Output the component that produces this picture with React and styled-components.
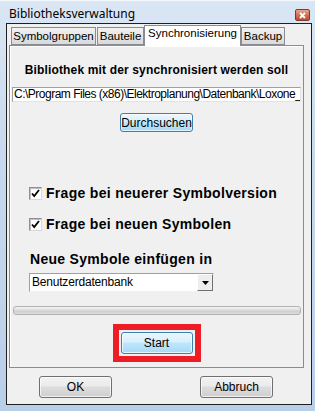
import styled, { createGlobalStyle } from "styled-components";

const GlobalStyle = createGlobalStyle`
  body {
    margin: 0;
    background: #ffffff;
  }
  * {
    box-sizing: border-box;
  }
`;

const Frame = styled.div`
  width: 315px;
  height: 411px;
  display: flex;
  flex-direction: column;
  padding: 0 3px 6px 6px;
  background: linear-gradient(180deg, #dae6f4 0%, #c6d8ed 40%, #b9cfe8 100%);
  border-top: 1px solid #f4f8fc;
`;

const TitleBar = styled.div`
  height: 22px;
  display: flex;
  align-items: center;
  justify-content: space-between;
  padding: 0 0 0 3px;
`;

const Title = styled.span`
  font-family: "Noto Sans", "Liberation Sans", sans-serif;
  font-size: 12px;
  color: #000;
  margin-top: 2px;
`;

const CloseButton = styled.div`
  width: 15px;
  height: 12px;
  margin: 6px 2px 0 0;
  border: 1px solid #7b3a2c;
  border-radius: 2px;
  background: linear-gradient(180deg, #e9a68f 0%, #d46f52 50%, #c24b2e 100%);
  display: flex;
  align-items: center;
  justify-content: center;
`;

const Client = styled.div`
  flex: 1;
  border: 1px solid #1f1f1f;
  background: #f0f0f0;
  padding: 3px 7px 0 2px;
  display: flex;
  flex-direction: column;
`;

const TabRow = styled.div`
  height: 18px;
  display: flex;
  align-items: flex-end;
  padding-left: 2px;
  position: relative;
  z-index: 1;
`;

const Tab = styled.div`
  width: ${(p) => p.$w}px;
  height: ${(p) => (p.$active ? "21px" : "18px")};
  margin-bottom: ${(p) => (p.$active ? "-1px" : "0")};
  margin-right: ${(p) => p.$gap || 0}px;
  padding-top: ${(p) => (p.$active ? "1px" : "2px")};
  border: 1px solid #898c95;
  border-bottom: ${(p) => (p.$active ? "none" : "1px solid #898c95")};
  background: ${(p) =>
    p.$active ? "#ffffff" : "linear-gradient(180deg, #f2f2f2 0%, #e5e5e5 50%, #d9d9d9 100%)"};
  font-family: "Liberation Sans", Arial, sans-serif;
  font-size: 11.5px;
  text-align: center;
  color: #000;
  white-space: nowrap;
`;

const Panel = styled.div`
  height: 323px;
  border: 1px solid #898c95;
  background: #f0f0f0;
  box-shadow: inset 1px 1px 0 #ffffff;
  display: flex;
  flex-direction: column;
  align-items: center;
  padding: 17px 2px 0;
`;

const Heading = styled.div`
  font-family: "Liberation Sans", Arial, sans-serif;
  font-size: 12px;
  font-weight: bold;
  letter-spacing: 0.15px;
  color: #000;
  line-height: 14px;
`;

const PathInput = styled.div`
  margin-top: 10px;
  align-self: stretch;
  height: 15px;
  border: 1px solid #a0a0a0;
  border-right-color: #e3e3e3;
  border-bottom-color: #e3e3e3;
  background: #fff;
  overflow: hidden;
  white-space: nowrap;
  font-family: "Liberation Sans", Arial, sans-serif;
  font-size: 12px;
  letter-spacing: -0.5px;
  line-height: 13px;
  padding-left: 1px;
  color: #000;
`;

const Button = styled.div`
  width: ${(p) => p.$w || 73}px;
  height: ${(p) => p.$h || 22}px;
  border: 1px solid ${(p) => (p.$focus ? "#3c7fb1" : "#707070")};
  border-radius: 3px;
  background: ${(p) =>
    p.$focus
      ? "linear-gradient(180deg, #eaf6fd 0%, #d9f0fc 45%, #bee6fd 50%, #a7d9f5 100%)"
      : "linear-gradient(180deg, #f2f2f2 0%, #ebebeb 45%, #dddddd 50%, #cfcfcf 100%)"};
  box-shadow: inset 0 0 0 1px rgba(255, 255, 255, 0.7);
  display: flex;
  align-items: center;
  justify-content: center;
  font-family: "Liberation Sans", Arial, sans-serif;
  font-size: 12px;
  color: #000;
`;

const BrowseButton = styled(Button)`
  margin-top: 11px;
`;

const Options = styled.div`
  align-self: stretch;
  display: flex;
  flex-direction: column;
  padding-left: 17px;
  margin-top: 54px;
`;

const CheckRow = styled.div`
  display: flex;
  align-items: center;
  height: 14px;
  margin-bottom: ${(p) => (p.$gap ? p.$gap : 0)}px;
  font-family: "Liberation Sans", Arial, sans-serif;
  font-size: 14px;
  font-weight: bold;
  letter-spacing: 0.3px;
  color: #000;
`;

const CheckBox = styled.span`
  width: 13px;
  height: 13px;
  margin-right: 4px;
  border: 1px solid #8f8f8f;
  border-right-color: #d8d8d8;
  border-bottom-color: #d8d8d8;
  background: #fff;
  box-shadow: inset 1px 1px 0 #c0c0c0;
  display: flex;
  align-items: center;
  justify-content: center;
`;

const FieldLabel = styled.div`
  margin-top: 20px;
  font-family: "Liberation Sans", Arial, sans-serif;
  font-size: 14px;
  font-weight: bold;
  letter-spacing: 0.3px;
  color: #000;
  line-height: 16px;
  padding-left: 1px;
`;

const SelectBox = styled.div`
  margin-top: 6px;
  width: 185px;
  height: 19px;
  border: 1px solid #a0a0a0;
  border-right-color: #f0f0f0;
  border-bottom-color: #f0f0f0;
  background: #fff;
  display: flex;
  align-items: stretch;
`;

const SelectText = styled.div`
  flex: 1;
  font-family: "Liberation Sans", Arial, sans-serif;
  font-size: 12px;
  letter-spacing: -0.2px;
  line-height: 17px;
  padding-left: 2px;
  color: #000;
`;

const SelectArrow = styled.div`
  width: 16px;
  border: 1px solid #fff;
  border-right-color: #707070;
  border-bottom-color: #707070;
  background: #eeeeee;
  display: flex;
  align-items: center;
  justify-content: center;
`;

const Progress = styled.div`
  margin-top: 14px;
  align-self: stretch;
  margin-left: 1px;
  height: 9px;
  border: 1px solid #b2b2b2;
  border-radius: 3px;
  background: linear-gradient(180deg, #f3f3f3 0%, #e0e0e0 40%, #cfcfcf 60%, #dcdcdc 100%);
`;

const Highlight = styled.div`
  margin-top: 9px;
  border: 6px solid #ee1c25;
  padding: 2px;
`;

const Footer = styled.div`
  display: flex;
  justify-content: space-between;
  padding: 8px 31px 0 30px;
`;

function Check() {
  return (
    <svg width="9" height="9" viewBox="0 0 9 9">
      <path d="M1 4.5 L3.2 7 L8 1" fill="none" stroke="#000" strokeWidth="1.8" />
    </svg>
  );
}

function App() {
  return (
    <>
      <GlobalStyle />
      <Frame>
        <TitleBar>
          <Title>Bibliotheksverwaltung</Title>
          <CloseButton>
            <svg width="7" height="7" viewBox="0 0 7 7">
              <path d="M1 1 L6 6 M6 1 L1 6" stroke="#fff" strokeWidth="1.8" />
            </svg>
          </CloseButton>
        </TitleBar>
        <Client>
          <TabRow>
            <Tab $w={85} $gap={1}>Symbolgruppen</Tab>
            <Tab $w={47}>Bauteile</Tab>
            <Tab $w={97} $active>Synchronisierung</Tab>
            <Tab $w={44}>Backup</Tab>
          </TabRow>
          <Panel>
            <Heading>Bibliothek mit der synchronisiert werden soll</Heading>
            <PathInput>C:\Program Files (x86)\Elektroplanung\Datenbank\Loxone_</PathInput>
            <BrowseButton $w={73} $h={19} $focus>
              Durchsuchen
            </BrowseButton>
            <Options>
              <CheckRow $gap={17}>
                <CheckBox>
                  <Check />
                </CheckBox>
                Frage bei neuerer Symbolversion
              </CheckRow>
              <CheckRow>
                <CheckBox>
                  <Check />
                </CheckBox>
                Frage bei neuen Symbolen
              </CheckRow>
              <FieldLabel>Neue Symbole einfügen in</FieldLabel>
              <SelectBox>
                <SelectText>Benutzerdatenbank</SelectText>
                <SelectArrow>
                  <svg width="7" height="4" viewBox="0 0 7 4">
                    <path d="M0 0 H7 L3.5 4 Z" fill="#000" />
                  </svg>
                </SelectArrow>
              </SelectBox>
            </Options>
            <Progress />
            <Highlight>
              <Button $w={72} $h={22} $focus>
                Start
              </Button>
            </Highlight>
          </Panel>
          <Footer>
            <Button>OK</Button>
            <Button>Abbruch</Button>
          </Footer>
        </Client>
      </Frame>
    </>
  );
}

export default App;
